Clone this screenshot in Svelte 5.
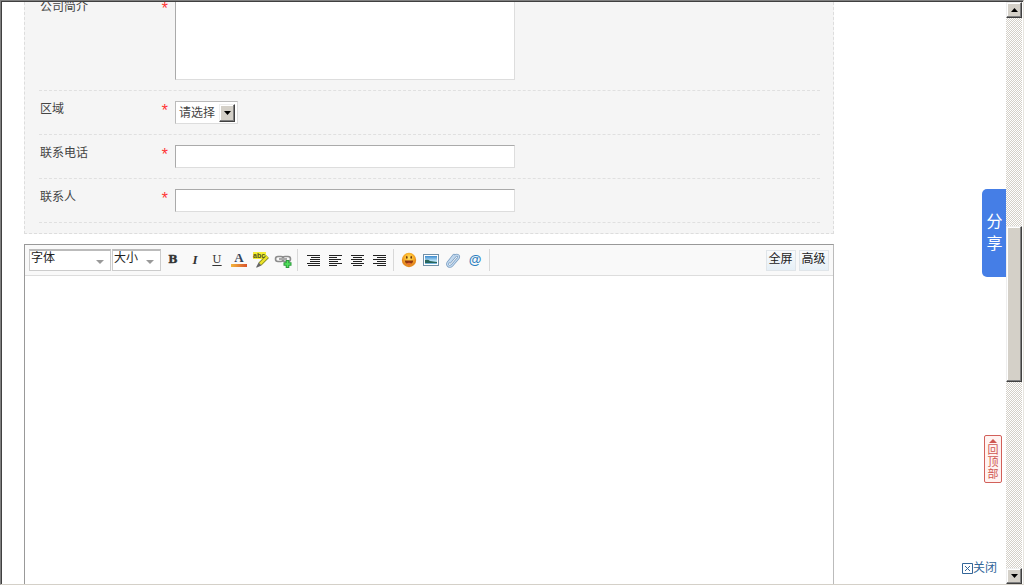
<script>
  let phone = $state('');
  let contact = $state('');
  let intro = $state('');

  const aligns = [
    { name: 'indent', rows: [[0, 13], [4, 9], [3, 10], [3, 10], [0, 13], [1, 12]] },
    { name: 'left', rows: [[0, 13], [0, 8], [0, 12], [0, 9], [0, 13], [0, 8]] },
    { name: 'center', rows: [[0, 13], [2, 9], [0, 13], [2, 9], [0, 13], [2, 9]] },
    { name: 'right', rows: [[0, 13], [4, 9], [0, 13], [4, 9], [0, 13], [4, 9]] }
  ];
</script>

<div class="window">
  <main class="page">
    <form class="form">
      <div class="row tall">
        <label for="intro">公司简介</label>
        <span class="star">*</span>
        <textarea id="intro" bind:value={intro}></textarea>
      </div>
      <div class="row">
        <span class="label">区域</span>
        <span class="star">*</span>
        <div class="select">
          <span>请选择</span>
          <button type="button" class="drop" aria-label="展开">
            <svg width="7" height="4"><path d="M0 0h7L3.5 4z" /></svg>
          </button>
        </div>
      </div>
      <div class="row">
        <label for="phone">联系电话</label>
        <span class="star">*</span>
        <input id="phone" type="text" bind:value={phone} />
      </div>
      <div class="row">
        <label for="contact">联系人</label>
        <span class="star">*</span>
        <input id="contact" type="text" bind:value={contact} />
      </div>
    </form>

    <section class="editor">
      <div class="toolbar">
        <div class="combo font">
          <span>字体</span>
          <svg width="8" height="4"><path d="M0 0h8L4 4z" /></svg>
        </div>
        <div class="combo size">
          <span>大小</span>
          <svg width="8" height="4"><path d="M0 0h8L4 4z" /></svg>
        </div>

        <div class="group">
          <span class="tool bold">B</span>
          <span class="tool italic">I</span>
          <span class="tool underline">U</span>
          <span class="tool">
            <svg width="18" height="18" viewBox="0 0 18 18">
              <defs>
                <linearGradient id="ink">
                  <stop offset="0" stop-color="#f3b63c" />
                  <stop offset="1" stop-color="#d9532c" />
                </linearGradient>
              </defs>
              <text x="9" y="11" text-anchor="middle" class="colorletter">A</text>
              <rect x="1" y="13" width="16" height="3" fill="url(#ink)" />
            </svg>
          </span>
          <span class="tool">
            <svg width="18" height="18" viewBox="0 0 18 18">
              <rect x="1" y="1" width="13" height="7" fill="#f4ee34" />
              <path d="M15.5 5.5 8 13" stroke="#858b1d" stroke-width="4" />
              <path d="M15.3 5.7 8.2 12.8" stroke="#eee329" stroke-width="2.4" />
              <path d="m6.6 11.6 2.8 2.8L5 16.5H4z" fill="#666" />
              <text x="1" y="7" class="abc">abc</text>
            </svg>
          </span>
          <span class="tool">
            <svg width="18" height="18" viewBox="0 0 18 18" fill="none">
              <rect x="1.5" y="5.5" width="8" height="5" rx="2.5" stroke="#8c8c8c" stroke-width="1.6" />
              <rect x="8.5" y="5.5" width="8" height="5" rx="2.5" stroke="#8c8c8c" stroke-width="1.6" />
              <path d="M5 8h8" stroke="#aaa" stroke-width="2" />
              <path d="M13.5 9v8M9.5 13h8" stroke="#2a9a3a" stroke-width="3.6" />
              <path d="M13.5 10v6M10.5 13h6" stroke="#52e35c" stroke-width="1.6" />
            </svg>
          </span>
        </div>
        <i class="sep"></i>
        <div class="group">
          {#each aligns as align (align.name)}
            <span class="tool">
              <svg width="13" height="11" viewBox="0 0 13 11">
                {#each align.rows as [x, w], i}
                  <rect {x} y={i * 2} width={w} height="1" fill="#222" />
                {/each}
              </svg>
            </span>
          {/each}
        </div>
        <i class="sep"></i>
        <div class="group">
          <span class="tool">
            <svg width="16" height="16" viewBox="0 0 16 16">
              <defs>
                <radialGradient id="face" cx=".5" cy=".35">
                  <stop offset="0" stop-color="#ffe262" />
                  <stop offset=".6" stop-color="#fbb52c" />
                  <stop offset="1" stop-color="#e58a20" />
                </radialGradient>
              </defs>
              <circle cx="8" cy="8" r="7.2" fill="url(#face)" />
              <ellipse cx="5.8" cy="5.4" rx=".8" ry="1.3" fill="#6b3710" />
              <ellipse cx="10.2" cy="5.4" rx=".8" ry="1.3" fill="#6b3710" />
              <path d="M3.8 8.6h8.4c0 5-8.4 5-8.4 0z" fill="#913912" />
              <path d="M5.5 11.4q2.5-1.5 5 0-2.5 2-5 0z" fill="#ec6b3d" />
            </svg>
          </span>
          <span class="tool">
            <svg width="16" height="16" viewBox="0 0 16 16">
              <defs>
                <linearGradient id="sky" x2="0" y2="1">
                  <stop offset="0" stop-color="#3b8bd0" />
                  <stop offset=".65" stop-color="#c5eafa" />
                  <stop offset="1" stop-color="#62a8d4" />
                </linearGradient>
              </defs>
              <rect x=".5" y="2.5" width="15" height="11" fill="#fff" stroke="#7190a8" />
              <rect x="2" y="4" width="12" height="8" fill="url(#sky)" />
              <path d="M2 8q3-1 5 1l7 1v1H2z" fill="#28665d" />
            </svg>
          </span>
          <span class="tool">
            <svg width="16" height="16" viewBox="0 0 16 16" fill="none" stroke-linecap="round">
              <path d="m5 10 5.2-6c2-2 4.5.2 2.8 2.3l-6 7c-2.5 2.6-6-.3-3.8-3L9 3.2" stroke="#7d9fc2" stroke-width="2.8" />
              <path d="m5 10 5.2-6c2-2 4.5.2 2.8 2.3l-6 7c-2.5 2.6-6-.3-3.8-3L9 3.2" stroke="#c3daf0" stroke-width="1.3" />
            </svg>
          </span>
          <span class="tool at">@</span>
        </div>
        <i class="sep"></i>

        <div class="modes">
          <button type="button">全屏</button>
          <button type="button">高级</button>
        </div>
      </div>
      <div class="content"></div>
    </section>
  </main>

  <div class="scrollbar">
    <div class="arrow"><svg width="7" height="4"><path d="M0 4h7L3.5 0z" /></svg></div>
    <div class="before"></div>
    <div class="thumb"></div>
    <div class="after"></div>
    <div class="arrow"><svg width="7" height="4"><path d="M0 0h7L3.5 4z" /></svg></div>
  </div>

  <div class="share"><span>分</span><span>享</span></div>
  <div class="totop">
    <svg width="8" height="4"><path d="M0 4h8L4 0z" /></svg>
    <span>回</span><span>顶</span><span>部</span>
  </div>
  <div class="close">
    <svg width="11" height="11" viewBox="0 0 11 11">
      <path d="M.5.5h10v10H.5zM3 3l5 5M8 3l-5 5" />
    </svg>
    <span>关闭</span>
  </div>
</div>

<style>
  :global(body) {
    background: #fff;
    overflow: hidden;
  }

  .window {
    position: relative;
    display: flex;
    box-sizing: border-box;
    width: 1024px;
    height: 585px;
    overflow: hidden;
    border: 1px solid #808080;
    border-right-color: #e8e6e0;
    border-bottom-color: #d4d0c8;
    box-shadow: inset 1px 1px 0 #404040;
    padding: 1px 1px 0 1px;
    color: #444;
    font-family: "Liberation Sans", "Noto Sans CJK SC", sans-serif;
    font-size: 12px;
    line-height: 16px;
  }

  .page {
    display: flex;
    flex-direction: column;
    flex: 1;
    padding-left: 22px;
  }

  .form {
    box-sizing: border-box;
    width: 810px;
    height: 232px;
    flex: none;
    padding: 0 13px 0 14px;
    background: #f5f5f5;
    border: 1px dashed #ddd;
    border-top: none;
  }

  .row {
    display: grid;
    grid-template-columns: 121px 15px 1fr;
    box-sizing: border-box;
    height: 44px;
    padding-top: 10px;
    border-bottom: 1px dashed #e0e0e0;
    align-items: start;
  }

  .row.tall {
    height: 89px;
    padding-top: 0;
  }

  label, .label {
    padding-left: 1px;
    line-height: 17px;
  }

  .row.tall label, .row.tall .star {
    margin-top: -3px;
  }

  .star {
    color: #f33;
    font-family: "Liberation Mono", monospace;
    font-size: 16px;
    line-height: 22px;
  }

  input, textarea {
    box-sizing: border-box;
    width: 340px;
    height: 23px;
    margin: 0;
    border: 1px solid #ddd;
    border-top-color: #aaa;
    border-left-color: #aaa;
    background: #fff;
    resize: none;
    outline: none;
  }

  textarea {
    height: 78px;
    border-top: none;
  }

  .select {
    display: flex;
    align-items: center;
    justify-content: space-between;
    box-sizing: border-box;
    width: 63px;
    height: 23px;
    padding: 0 2px 0 3px;
    background: #fff;
    border: 1px solid #ddd;
    border-top-color: #bbb;
    border-left-color: #bbb;
  }

  .drop, .arrow {
    display: flex;
    align-items: center;
    justify-content: center;
    box-sizing: border-box;
    width: 16px;
    height: 16px;
    padding: 0;
    background: #d4d0c8;
    border: 1px solid #404040;
    border-top-color: #eee;
    border-left-color: #eee;
    box-shadow: inset -1px -1px 0 #808080, inset 1px 1px 0 #fff;
  }

  .drop {
    height: 18px;
  }

  .editor {
    display: flex;
    flex-direction: column;
    box-sizing: border-box;
    width: 810px;
    flex: 1;
    margin-top: 10px;
    border: 1px solid #999;
    border-right-color: #bbb;
    border-bottom: none;
  }

  .toolbar {
    display: flex;
    align-items: center;
    box-sizing: border-box;
    height: 31px;
    padding: 0 4px;
    background: #f9f9f9;
    border-bottom: 1px solid #ddd;
  }

  .combo {
    display: flex;
    justify-content: space-between;
    align-items: center;
    box-sizing: border-box;
    height: 22px;
    padding: 0 6px 0 1px;
    margin-right: 1px;
    background: #fff;
    border: 1px solid #ccc;
    border-top: 2px solid #bbb;
    color: #222;
  }

  .combo span {
    margin-top: -5px;
  }

  .combo svg {
    margin-top: 3px;
    fill: #999;
  }

  .font {
    width: 82px;
  }

  .size {
    width: 49px;
    margin-right: 0;
  }

  .group {
    display: flex;
    padding: 0 3px 0 4px;
  }

  .size + .group {
    padding-left: 1px;
  }

  .tool {
    display: flex;
    align-items: center;
    justify-content: center;
    width: 22px;
    height: 22px;
    color: #333;
    font: bold 13px/22px "DejaVu Serif", serif;
  }

  .bold {
    font-size: 11px;
    -webkit-text-stroke: 0.4px #333;
  }

  .italic {
    font: italic bold 13px/22px "Liberation Serif", serif;
  }

  .underline {
    font: 11px/22px "DejaVu Serif", serif;
    text-decoration: underline;
    text-underline-offset: 2px;
  }

  .colorletter {
    font: bold 13px "Liberation Serif", serif;
    fill: #34445a;
  }

  .abc {
    font: bold 7px "Liberation Sans", sans-serif;
    fill: #4d521c;
  }

  .at {
    color: #2d7fc0;
    font: bold 13px/20px "Liberation Sans", sans-serif;
  }

  .sep {
    width: 1px;
    height: 22px;
    background: #d8d8d8;
  }

  .modes {
    display: flex;
    gap: 3px;
    margin-left: auto;
  }

  .modes button {
    box-sizing: border-box;
    width: 30px;
    height: 21px;
    padding: 0 1px 2px 0;
    border: 1px solid #e0e5e9;
    background: linear-gradient(#f9fafb, #e6f0f7);
    color: #222;
    font: inherit;
  }

  .content {
    flex: 1;
    background: #fff;
  }

  .scrollbar {
    display: flex;
    flex-direction: column;
    width: 16px;
    background: repeating-conic-gradient(#d4d0c8 0 25%, #fff 0 50%) 0 0 / 2px 2px;
  }

  .arrow {
    flex: none;
  }

  .before {
    height: 208px;
  }

  .thumb {
    box-sizing: border-box;
    height: 156px;
    background: #d4d0c8;
    border: 1px solid #404040;
    border-top-color: #eee;
    border-left-color: #eee;
    box-shadow: inset -1px -1px 0 #808080, inset 1px 1px 0 #fff;
  }

  .after {
    flex: 1;
  }

  .share {
    position: absolute;
    top: 188px;
    left: 981px;
    display: flex;
    flex-direction: column;
    align-items: center;
    box-sizing: border-box;
    width: 24px;
    height: 88px;
    padding: 22px 0 0 1px;
    border-radius: 5px 0 0 5px;
    background: #457ee6;
    color: #fff;
    font-size: 16px;
    line-height: 22px;
  }

  .totop {
    position: absolute;
    top: 434px;
    left: 983px;
    display: flex;
    flex-direction: column;
    align-items: center;
    box-sizing: border-box;
    width: 18px;
    height: 48px;
    padding-top: 3px;
    border: 1px solid #d2605a;
    border-radius: 2px;
    background: #fff3f1;
    color: #cf5650;
    font-size: 11px;
    line-height: 12px;
  }

  .totop svg {
    flex: none;
    margin-bottom: 1px;
    fill: #cf5650;
  }

  .close {
    position: absolute;
    top: 559px;
    left: 961px;
    display: flex;
    align-items: center;
    color: #336699;
  }

  .close svg {
    fill: none;
    stroke: #336699;
  }
</style>
